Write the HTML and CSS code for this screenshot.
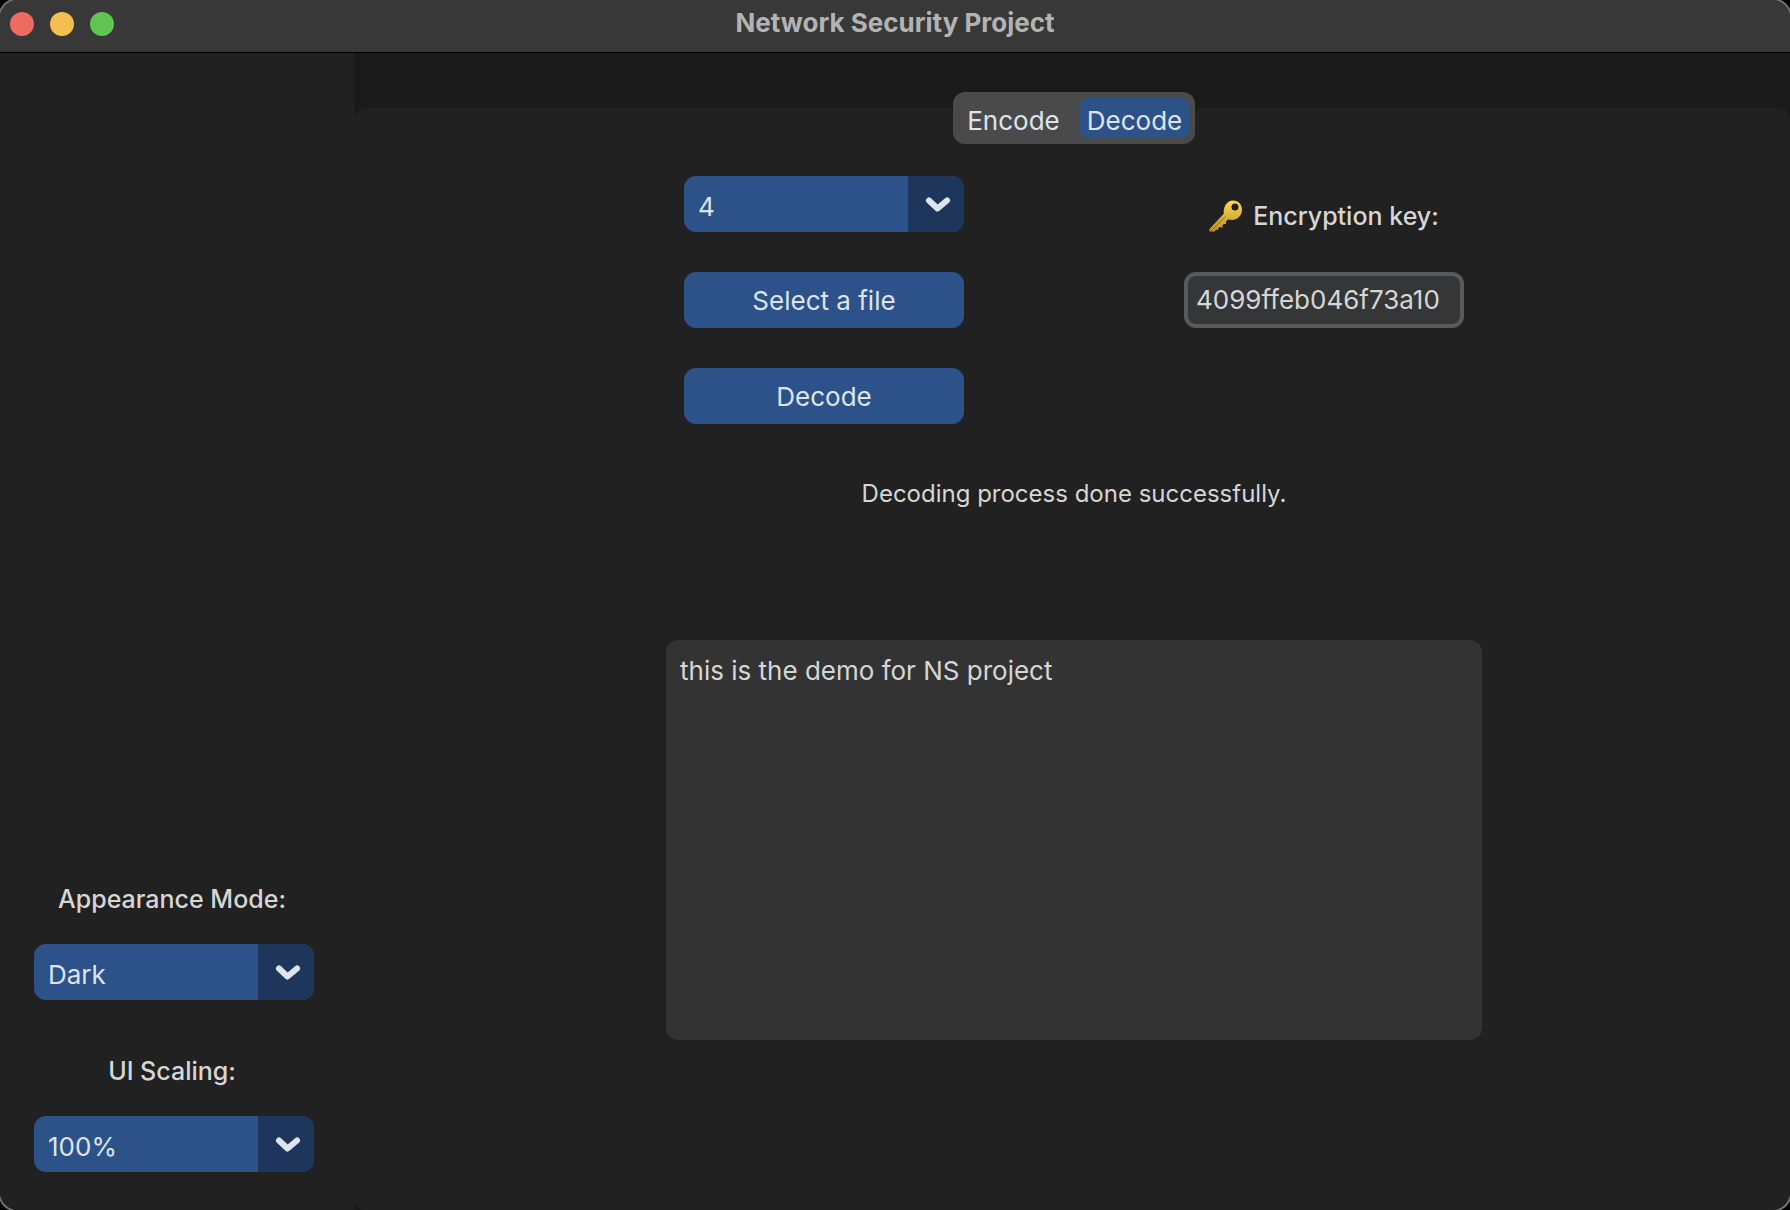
FILE: index.html
```html
<!DOCTYPE html>
<html lang="en">
<head>
<meta charset="utf-8">
<title>Network Security Project</title>
<link rel="stylesheet" href="styles.css">
</head>
<body>
<div class="window">
  <header class="titlebar">
    <div class="lights">
      <button class="light light-close" aria-label="Close"></button>
      <button class="light light-minimize" aria-label="Minimize"></button>
      <button class="light light-zoom" aria-label="Zoom"></button>
    </div>
    <h1 class="title">Network Security Project</h1>
  </header>
  <div class="body">
    <aside class="sidebar">
      <label class="label side-label" for="mode">Appearance Mode:</label>
      <div class="option">
        <select id="mode"><option>Dark</option><option>Light</option><option>System</option></select>
        <svg class="chevron" viewBox="0 0 56 56" aria-hidden="true"><path d="M21 24.500 L29.500 32.500 L39 24.500"/></svg>
      </div>
      <label class="label side-label" for="scaling">UI Scaling:</label>
      <div class="option">
        <select id="scaling"><option>100%</option><option>80%</option><option>120%</option></select>
        <svg class="chevron" viewBox="0 0 56 56" aria-hidden="true"><path d="M21 24.500 L29.500 32.500 L39 24.500"/></svg>
      </div>
    </aside>
    <main class="tabview">
      <div class="panel">
        <div class="tabs">
          <button class="tab">Encode</button>
          <button class="tab tab-active">Decode</button>
        </div>
        <div class="form">
          <div class="option">
            <select aria-label="Bits"><option>4</option><option>2</option><option>1</option></select>
            <svg class="chevron" viewBox="0 0 56 56" aria-hidden="true"><path d="M21 24.500 L29.500 32.500 L39 24.500"/></svg>
          </div>
          <label class="label key-label" for="key">
            <svg class="key-icon" viewBox="0 0 34 32" aria-hidden="true">
              <defs>
                <linearGradient id="gold" x1="0" y1="0" x2="0" y2="1">
                  <stop offset="0" stop-color="#f7d94c"/>
                  <stop offset="1" stop-color="#c1922b"/>
                </linearGradient>
              </defs>
              <path fill="url(#gold)" fill-rule="evenodd" d="M24 0.5C29.500 0.500 33 4.500 33 9.500C33 15.500 28.500 20 23 20C21.500 20 20.300 19.700 19.300 19.200L17 21.500L17 24L14.500 24L13.500 25.500L13.500 28L11.500 27L9.500 27.500L9 30L7 29.500L5.500 31.500L0.500 31.500L0.500 29L14.800 13.800C14 7 18 0.500 24 0.500ZM26 3.500A3.500 3.500 0 1 0 26 10.500A3.500 3.500 0 1 0 26 3.500Z"/>
              <path fill="none" stroke="#8d681c" stroke-width="1" d="M2.500 30.500L16.500 16.500"/>
            </svg>
            <span>Encryption key:</span>
          </label>
          <button class="action">Select a file</button>
          <input class="entry" id="key" type="text" value="4099ffeb046f73a10">
          <button class="action">Decode</button>
        </div>
        <p class="status">Decoding process done successfully.</p>
        <textarea class="output" aria-label="Decoded text">this is the demo for NS project</textarea>
      </div>
    </main>
  </div>
</div>
</body>
</html>
```
FILE: styles.css
```css
* {
  box-sizing: border-box;
}

body {
  margin: 0;
  background: #000;
  color: #d6d6d6;
  font: 26px/32px Inter, "Liberation Sans", sans-serif;
}

button,
input,
select,
textarea {
  margin: 0;
  border: 0;
  font: inherit;
}

.window {
  display: flex;
  flex-direction: column;
  min-height: 100vh;
  overflow: hidden;
  background: #1a1a1a;
  border-radius: 18px;
  box-shadow: 0 0 0 2px #777;
}

/* Title bar */
.titlebar {
  display: grid;
  grid-template-columns: 1fr auto 1fr;
  align-items: center;
  height: 53px;
  padding: 0 10px;
  background: #383838;
  border-bottom: 1px solid #000;
}

.lights {
  display: flex;
  gap: 16px;
  padding-bottom: 4px;
}

.light {
  width: 24px;
  height: 24px;
  padding: 0;
  border-radius: 50%;
}

.light-close { background: #ed6b5f; }
.light-minimize { background: #f5bf4f; }
.light-zoom { background: #61c554; }

.title {
  margin: 0;
  padding-bottom: 6px;
  color: #b3b3b3;
  font-size: 26px;
  font-weight: 700;
}

/* Layout */
.body {
  display: flex;
  flex: 1;
}

.sidebar {
  display: flex;
  flex: 0 0 354px;
  flex-direction: column;
  justify-content: flex-end;
  padding: 0 40px 38px 34px;
  background: #212121;
}

.label {
  font-size: 25px;
  font-weight: 500;
}

.side-label {
  margin: 55px 0 29px;
  padding-right: 4px;
  text-align: center;
}

.tabview {
  display: flex;
  flex: 1;
  padding-top: 55px;
}

.panel {
  display: flex;
  flex: 1;
  flex-direction: column;
  align-items: center;
  padding-left: 4px;
  background: #212121;
  border-radius: 12px;
}

/* The tab switch straddles the panel's top edge */
.tabs {
  display: flex;
  gap: 12px;
  height: 52px;
  margin-top: -16px;
  padding: 6px;
  background: #4a4a4a;
  border-radius: 12px;
}

.tab {
  width: 109px;
  padding: 5px 0 0;
  background: transparent;
  border-radius: 8px;
  color: #dce4ee;
  line-height: 34px;
}

.tab-active {
  background: #2d5289;
}

.form {
  display: grid;
  grid-template-columns: 280px 280px;
  column-gap: 220px;
  row-gap: 40px;
  padding-top: 32px;
}

/* Controls */
.option {
  display: grid;
  grid-template-columns: 1fr 56px;
  height: 56px;
  overflow: hidden;
  background: #2d5289;
  border-radius: 12px;
}

.option select {
  grid-area: 1 / 1 / 2 / 3;
  padding: 6px 14px 0;
  appearance: none;
  background: transparent;
  color: #dce4ee;
}

.chevron {
  grid-area: 1 / 2;
  width: 56px;
  height: 56px;
  background: #1f365c;
  fill: none;
  stroke: #dce4ee;
  stroke-width: 6px;
  stroke-linecap: round;
  stroke-linejoin: round;
  pointer-events: none;
}

.action {
  height: 56px;
  padding: 2px 0 0;
  background: #2d5289;
  border-radius: 12px;
  color: #dce4ee;
}

.key-label {
  display: flex;
  align-items: center;
  justify-content: center;
  gap: 10px;
  padding-top: 24px;
}

.key-icon {
  width: 34px;
  height: 32px;
}

.entry {
  width: 280px;
  height: 56px;
  padding: 0 8px 2px;
  background: #343638;
  border: 4px solid #565b5e;
  border-radius: 12px;
  color: #d6d6d6;
}

.status {
  margin: 54px 0 130px;
  font-size: 24px;
}

.output {
  width: 816px;
  height: 400px;
  padding: 15px 14px;
  resize: none;
  background: #333;
  border-radius: 12px;
  color: #d6d6d6;
}
```
